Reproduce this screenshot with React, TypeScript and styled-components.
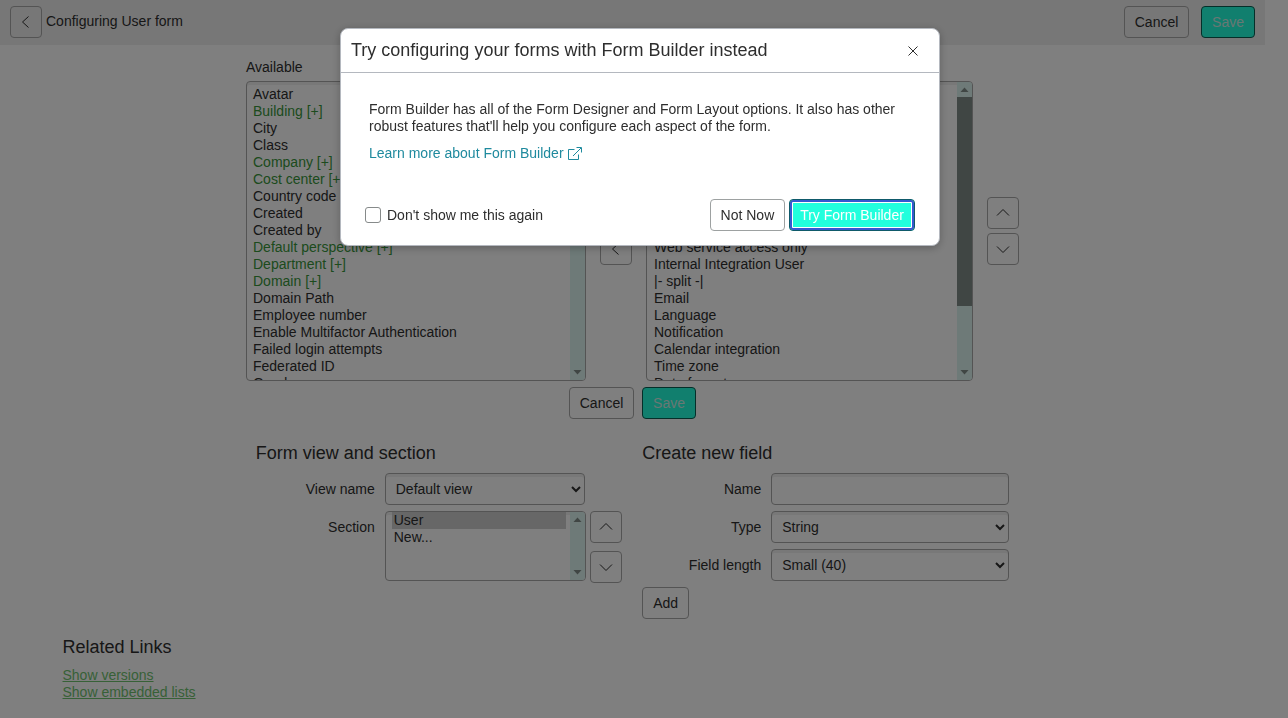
import styled, { createGlobalStyle } from "styled-components";

const available = [
    { name: "Avatar" }, { name: "Building [+]", ref: true }, { name: "City" }, { name: "Class" },
    { name: "Company [+]", ref: true }, { name: "Cost center [+]", ref: true }, { name: "Country code" },
    { name: "Created" }, { name: "Created by" }, { name: "Default perspective [+]", ref: true },
    { name: "Department [+]", ref: true }, { name: "Domain [+]", ref: true }, { name: "Domain Path" },
    { name: "Employee number" }, { name: "Enable Multifactor Authentication" }, { name: "Failed login attempts" },
    { name: "Federated ID" }, { name: "Gender" }, { name: "Home phone" }, { name: "Identity type" },
    { name: "Introduction" }, { name: "Last login" }, { name: "Last login device" }, { name: "Last login time" },
    { name: "Last password" }, { name: "LDAP server [+]", ref: true }, { name: "Location [+]", ref: true },
    { name: "Manager [+]", ref: true }, { name: "Middle name" }, { name: "Mobile phone" }, { name: "Name" },
];

const selected = [
    "User ID", "First name", "Last name", "Title", "Department", "Password", "Password needs reset",
    "Locked out", "Active", "Web service access only", "Internal Integration User", "|- split -|",
    "Email", "Language", "Notification", "Calendar integration", "Time zone", "Date format",
    "Business phone", "Mobile phone", "Photo", "Manager",
];

const ChevronIcon = ({ dir }: { dir: "left" | "up" | "down" }) => {
    const points = {
        left: "9.5,1.5 3.5,7 9.5,12.5",
        up: "1,9.5 7,3.5 13,9.5",
        down: "1,4.5 7,10.5 13,4.5",
    };
    return (
        <svg width="14" height="14" viewBox="0 0 14 14" fill="none" stroke="currentColor" strokeWidth="1">
            <polyline points={points[dir]} />
        </svg>
    );
};

const ScrollBar = ({ thumb }: { thumb?: number }) => (
    <ScrollTrack>
        <ScrollArrow>
            <svg width="9" height="5" viewBox="0 0 9 5"><path d="M0.5 5 H8.5 L4.5 0.5 Z" fill="#808c88" /></svg>
        </ScrollArrow>
        <ScrollRail>{thumb ? <ScrollThumb style={{ height: thumb }} /> : null}</ScrollRail>
        <ScrollArrow>
            <svg width="9" height="5" viewBox="0 0 9 5"><path d="M0.5 0 H8.5 L4.5 4.5 Z" fill="#808c88" /></svg>
        </ScrollArrow>
    </ScrollTrack>
);

export default function App() {
    return (
        <>
            <GlobalStyle />
            <Page>
                <Header>
                    <HeaderLeft>
                        <IconButton aria-label="Back"><ChevronIcon dir="left" /></IconButton>
                        <HeaderTitle>Configuring User form</HeaderTitle>
                    </HeaderLeft>
                    <HeaderRight>
                        <CancelButton>Cancel</CancelButton>
                        <PrimaryButton>Save</PrimaryButton>
                    </HeaderRight>
                </Header>

                <Bucket>
                    <Column>
                        <ColumnLabel>Available</ColumnLabel>
                        <ListFrame>
                            <ListBox multiple $w={340} $h={300} $top={4} $left={4} defaultValue={[]}>
                                {available.map((item, i) => (
                                    <ListOption key={i} $ref={item.ref}>{item.name}</ListOption>
                                ))}
                            </ListBox>
                            <ScrollBar thumb={78} />
                        </ListFrame>
                    </Column>
                    <ArrowStack>
                        <IconButton aria-label="Add"><ChevronIcon dir="left" /></IconButton>
                        <IconButton aria-label="Remove"><ChevronIcon dir="left" /></IconButton>
                    </ArrowStack>
                    <Column>
                        <ColumnLabel>Selected</ColumnLabel>
                        <ListFrame>
                            <ListBox multiple $w={327} $h={300} $top={4} $left={5} defaultValue={[]}>
                                {selected.map((item, i) => (
                                    <ListOption key={i}>{item}</ListOption>
                                ))}
                            </ListBox>
                            <ScrollBar thumb={209} />
                        </ListFrame>
                    </Column>
                    <ArrowStack>
                        <IconButton aria-label="Move up"><ChevronIcon dir="up" /></IconButton>
                        <IconButton aria-label="Move down"><ChevronIcon dir="down" /></IconButton>
                    </ArrowStack>
                </Bucket>

                <BucketActions>
                    <CancelButton>Cancel</CancelButton>
                    <PrimaryButton>Save</PrimaryButton>
                </BucketActions>

                <Forms>
                    <FormColumn $w={366.5}>
                        <Heading>Form view and section</Heading>
                        <FieldRow>
                            <FieldLabel>View name</FieldLabel>
                            <Dropdown $w={200} defaultValue="Default view">
                                <option>Default view</option>
                            </Dropdown>
                        </FieldRow>
                        <SectionRow>
                            <FieldLabel>Section</FieldLabel>
                            <ListFrame>
                                <ListBox multiple $w={201} $h={70} $top={0} $left={6} defaultValue={["User"]}>
                                    <ListOption>User</ListOption>
                                    <ListOption>New...</ListOption>
                                </ListBox>
                                <ScrollBar />
                            </ListFrame>
                            <SectionArrows>
                                <IconButton aria-label="Section up"><ChevronIcon dir="up" /></IconButton>
                                <IconButton aria-label="Section down"><ChevronIcon dir="down" /></IconButton>
                            </SectionArrows>
                        </SectionRow>
                    </FormColumn>
                    <FormColumn $w={367}>
                        <Heading>Create new field</Heading>
                        <FieldRow>
                            <FieldLabel>Name</FieldLabel>
                            <TextInput />
                        </FieldRow>
                        <FieldRow>
                            <FieldLabel>Type</FieldLabel>
                            <Dropdown $w={238} defaultValue="String">
                                <option>String</option>
                            </Dropdown>
                        </FieldRow>
                        <FieldRow>
                            <FieldLabel>Field length</FieldLabel>
                            <Dropdown $w={238} defaultValue="Small (40)">
                                <option>Small (40)</option>
                            </Dropdown>
                        </FieldRow>
                        <AddRow>
                            <Button>Add</Button>
                        </AddRow>
                    </FormColumn>
                </Forms>

                <Related>
                    <Heading>Related Links</Heading>
                    <RelatedLink href="#">Show versions</RelatedLink>
                    <RelatedLink href="#">Show embedded lists</RelatedLink>
                </Related>
            </Page>

            <Overlay>
                <Modal>
                    <ModalHeader>
                        <ModalTitle>Try configuring your forms with Form Builder instead</ModalTitle>
                        <CloseButton aria-label="Close">
                            <svg width="10" height="10" viewBox="0 0 10 10" fill="none" stroke="currentColor" strokeWidth="1">
                                <path d="M0.5 0.5 L9.5 9.5 M9.5 0.5 L0.5 9.5" />
                            </svg>
                        </CloseButton>
                    </ModalHeader>
                    <ModalBody>
                        <ModalText>
                            Form Builder has all of the Form Designer and Form Layout options. It also has other
                            robust features that'll help you configure each aspect of the form.
                        </ModalText>
                        <LearnLink href="#">
                            Learn more about Form Builder
                            <svg width="14" height="14" viewBox="0 0 14 14" fill="none" stroke="currentColor" strokeWidth="1">
                                <path d="M10.5 7.5 V12.5 H0.5 V2.5 H6.5 M5 9 L13 1 M8.5 0.5 H13.5 V5.5" />
                            </svg>
                        </LearnLink>
                    </ModalBody>
                    <ModalFooter>
                        <CheckLabel>
                            <CheckBox type="checkbox" />
                            Don't show me this again
                        </CheckLabel>
                        <FooterButtons>
                            <ModalButton>Not Now</ModalButton>
                            <FocusedButton>Try Form Builder</FocusedButton>
                        </FooterButtons>
                    </ModalFooter>
                </Modal>
            </Overlay>
        </>
    );
}

const GlobalStyle = createGlobalStyle`
    html, body {
        margin: 0;
        background: #fff;
        overflow: hidden;
    }
    body, button, select, input {
        font-family: "Liberation Sans", Arial, sans-serif;
        font-size: 14px;
        color: #2e2e2e;
    }
`;

const Page = styled.div`
    width: 1265px;
    height: 718px;
    overflow: hidden;
`;

const Header = styled.header`
    height: 45px;
    box-sizing: border-box;
    padding: 6px 10px 0;
    background: #eeeeee;
    display: flex;
    justify-content: space-between;
`;

const HeaderLeft = styled.div`
    display: flex;
    gap: 4px;
`;

const HeaderTitle = styled.div`
    line-height: 30px;
`;

const HeaderRight = styled.div`
    display: flex;
    gap: 12px;
`;

const Button = styled.button`
    height: 32px;
    box-sizing: border-box;
    padding: 0 10px;
    border: 1px solid #a8a8a8;
    border-radius: 4px;
    background: transparent;
    line-height: 30px;
`;

const CancelButton = styled(Button)`
    padding: 0 9.75px;
`;

const PrimaryButton = styled(Button)`
    background: #22ffdd;
    border-color: #0b5e52;
    color: #d0f0e8;
`;

const IconButton = styled(Button)`
    width: 32px;
    padding: 0;
    display: flex;
    align-items: center;
    justify-content: center;
`;

const Bucket = styled.div`
    display: flex;
    justify-content: center;
    gap: 14px;
    margin-top: 14px;
`;

const Column = styled.div`
    display: flex;
    flex-direction: column;
`;

const ColumnLabel = styled.div`
    line-height: 17px;
    margin-bottom: 5px;
`;

const ArrowStack = styled.div`
    height: 300px;
    align-self: flex-end;
    display: flex;
    flex-direction: column;
    justify-content: center;
    gap: 4px;
`;

const ListFrame = styled.div`
    position: relative;
    display: flex;
`;

const ListBox = styled.select<{ $w: number; $h: number; $top: number; $left: number }>`
    width: ${(p) => p.$w}px;
    height: ${(p) => p.$h}px;
    box-sizing: border-box;
    padding: ${(p) => p.$top}px 19px ${(p) => p.$top}px ${(p) => p.$left}px;
    border: 1px solid #a8a8a8;
    border-radius: 4px;
    background: #fff;
    box-shadow: inset 0 3px 0 #f0f0f0;
    outline: none;
    overflow: hidden;
`;

const ListOption = styled.option<{ $ref?: boolean }>`
    min-height: 16px;
    color: ${(p) => (p.$ref ? "#38963a" : "#2e2e2e")};
`;

/* the browser draws no scrollbar in the photographed page, so it lies over the list */
const ScrollTrack = styled.div`
    position: absolute;
    top: 1px;
    right: 1px;
    bottom: 1px;
    width: 15px;
    background: #dcf4f0;
    border-radius: 0 3px 3px 0;
    display: flex;
    flex-direction: column;
`;

const ScrollArrow = styled.div`
    height: 15px;
    flex: none;
    display: flex;
    align-items: center;
    justify-content: center;
`;

const ScrollRail = styled.div`
    flex: 1;
`;

const ScrollThumb = styled.div`
    background: #808c88;
`;

const BucketActions = styled.div`
    display: flex;
    justify-content: center;
    gap: 8px;
    margin-top: 6px;
`;

const Forms = styled.div`
    display: flex;
    justify-content: center;
    gap: 20px;
    margin-top: 24px;
`;

const FormColumn = styled.div<{ $w: number }>`
    width: ${(p) => p.$w}px;
    display: flex;
    flex-direction: column;
    gap: 6px;
`;

const Heading = styled.h2`
    margin: 0 0 4px;
    font-size: 18px;
    font-weight: 400;
    line-height: 20px;
`;

const FieldRow = styled.div`
    display: flex;
    align-items: center;
    gap: 10px;
    height: 32px;
`;

const SectionRow = styled.div`
    display: flex;
    align-items: flex-start;
    gap: 10px;
`;

const SectionArrows = styled.div`
    display: flex;
    flex-direction: column;
    gap: 8px;
    margin-left: -6px;
`;

const FieldLabel = styled.label`
    width: 119px;
    text-align: right;
    line-height: 32px;
`;

const Dropdown = styled.select<{ $w: number }>`
    width: ${(p) => p.$w}px;
    height: 32px;
    box-sizing: border-box;
    padding: 0 6px;
    border: 1px solid #a8a8a8;
    border-radius: 4px;
    background: #fff;
    box-shadow: inset 0 3px 0 #f0f0f0;
`;

const TextInput = styled.input`
    width: 238px;
    height: 32px;
    box-sizing: border-box;
    padding: 0 10px;
    border: 1px solid #a8a8a8;
    border-radius: 4px;
    background: #fff;
    box-shadow: inset 0 3px 0 #f0f0f0;
`;

const AddRow = styled.div`
    display: flex;
`;

const Related = styled.div`
    padding-left: 62.5px;
    margin-top: 18px;
    display: flex;
    flex-direction: column;
    align-items: flex-start;

    h2 {
        margin-bottom: 10px;
    }
`;

const RelatedLink = styled.a`
    color: #6fc26f;
    line-height: 17px;
`;

const Overlay = styled.div`
    position: fixed;
    inset: 0;
    background: rgba(0, 0, 0, 0.5);
    box-sizing: border-box;
    padding: 28px 0 0 340px;
`;

const Modal = styled.div`
    width: 600px;
    height: 218px;
    box-sizing: border-box;
    background: #fff;
    border: 1px solid #b4b8bf;
    border-radius: 8px;
    box-shadow: 0 2px 8px rgba(0, 0, 0, 0.25);
    display: flex;
    flex-direction: column;
`;

const ModalHeader = styled.div`
    height: 44px;
    box-sizing: border-box;
    padding: 0 21px 0 10px;
    border-bottom: 1px solid #b4b8bf;
    display: flex;
    align-items: center;
    justify-content: space-between;
`;

const ModalTitle = styled.div`
    font-size: 18px;
    line-height: 40px;
    margin-bottom: 2px;
`;

const CloseButton = styled.button`
    border: none;
    background: none;
    padding: 0;
    height: 10px;
    display: flex;
`;

const ModalBody = styled.div`
    flex: 1;
    padding: 28px 28px 0;
`;

const ModalText = styled.p`
    margin: 0 0 10px;
    line-height: 17px;
`;

const LearnLink = styled.a`
    color: #1f8a9e;
    text-decoration: none;
    line-height: 17px;
    display: inline-flex;
    align-items: center;
    gap: 4px;
`;

const ModalFooter = styled.div`
    padding: 0 24px 14px;
    display: flex;
    align-items: center;
    justify-content: space-between;
`;

const CheckLabel = styled.label`
    display: flex;
    align-items: center;
    gap: 6px;
`;

const CheckBox = styled.input`
    appearance: none;
    width: 16px;
    height: 16px;
    margin: 0;
    border: 1px solid #868a8a;
    border-radius: 3px;
    background: #fff;
`;

const FooterButtons = styled.div`
    display: flex;
    gap: 4px;
`;

const ModalButton = styled(CancelButton)`
    border-color: #9da1a1;
`;

const FocusedButton = styled(Button)`
    width: 126px;
    padding: 0;
    background: #22ffdd;
    border-color: #0f5a6a;
    color: #fff;
    box-shadow: inset 0 0 0 2px #3558d0, inset 0 0 0 3px #fff;
`;
